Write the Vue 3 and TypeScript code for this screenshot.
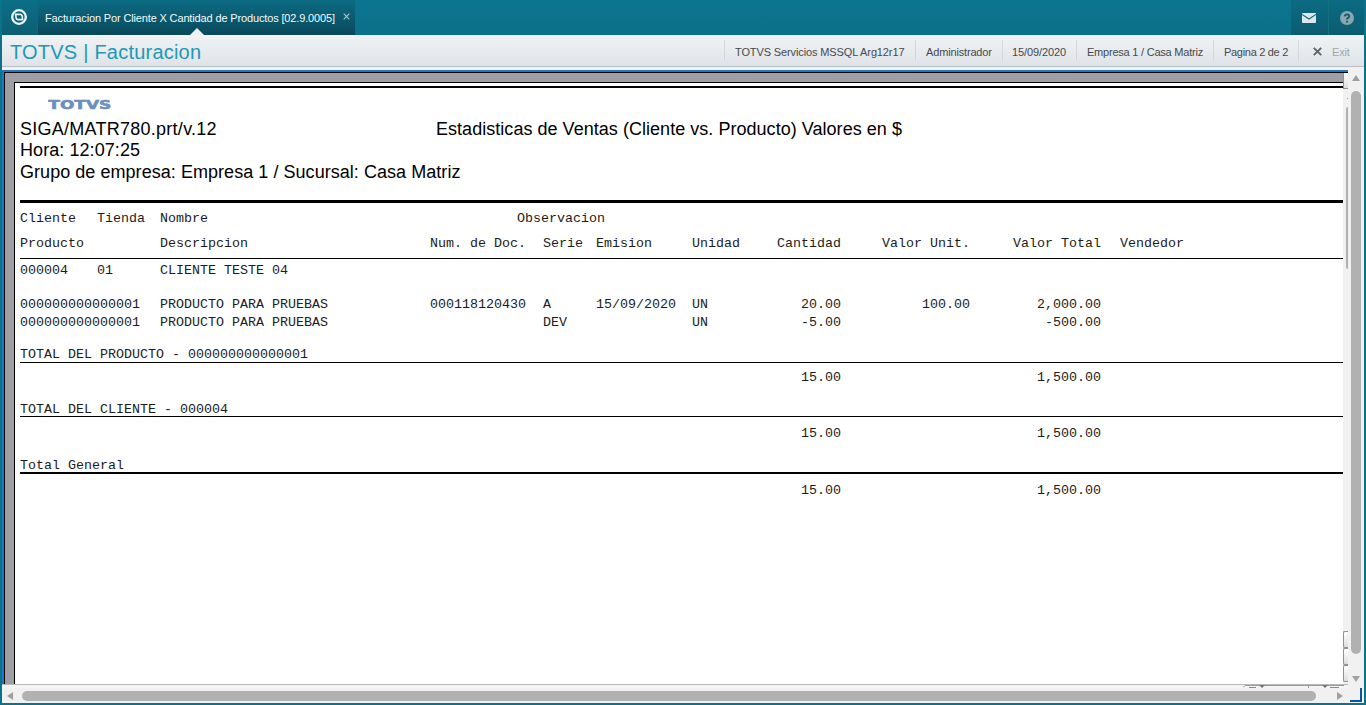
<script setup lang="ts">
interface Cell { col: string; text: string }
interface Line { gap: string; cells: Cell[]; rule?: string }

const c = (col: string, text: string): Cell => ({ col, text })

const info: { id: string; text: string }[] = [
  { id: 'server', text: 'TOTVS Servicios MSSQL Arg12r17' },
  { id: 'user', text: 'Administrador' },
  { id: 'date', text: '15/09/2020' },
  { id: 'company', text: 'Empresa 1 / Casa Matriz' },
  { id: 'pages', text: 'Pagina 2 de 2' },
]

const lines: Line[] = [
  { gap: 'g8', cells: [c('a', 'Cliente'), c('b', 'Tienda'), c('n', 'Nombre'), c('obs', 'Observacion')] },
  {
    gap: 'g11',
    rule: 'thin after8',
    cells: [
      c('a', 'Producto'), c('n', 'Descripcion'), c('doc', 'Num. de Doc.'), c('ser', 'Serie'),
      c('emi', 'Emision'), c('uni', 'Unidad'), c('qty', 'Cantidad'), c('price', 'Valor Unit.'),
      c('total', 'Valor Total'), c('seller', 'Vendedor'),
    ],
  },
  { gap: 'g4', cells: [c('a', '000004'), c('b', '01'), c('n', 'CLIENTE TESTE 04')] },
  {
    gap: 'g20',
    cells: [
      c('a', '000000000000001'), c('n', 'PRODUCTO PARA PRUEBAS'), c('doc', '000118120430'), c('ser', 'A'),
      c('emi', '15/09/2020'), c('uni', 'UN'), c('qty', '20.00'), c('price', '100.00'), c('total', '2,000.00'),
    ],
  },
  {
    gap: 'g4',
    cells: [
      c('a', '000000000000001'), c('n', 'PRODUCTO PARA PRUEBAS'), c('ser', 'DEV'), c('uni', 'UN'),
      c('qty', '-5.00'), c('total', '-500.00'),
    ],
  },
  { gap: 'g18', rule: 'thin after1', cells: [c('a', 'TOTAL DEL PRODUCTO - 000000000000001')] },
  { gap: 'g7', cells: [c('qty', '15.00'), c('total', '1,500.00')] },
  { gap: 'g18', rule: 'thin', cells: [c('a', 'TOTAL DEL CLIENTE - 000004')] },
  { gap: 'g9', cells: [c('qty', '15.00'), c('total', '1,500.00')] },
  { gap: 'g18', rule: 'medium', cells: [c('a', 'Total General')] },
  { gap: 'g9', cells: [c('qty', '15.00'), c('total', '1,500.00')] },
]
</script>

<template>
  <div class="window">
    <header class="topbar">
      <div class="brand">
        <svg width="16" height="16" viewBox="0 0 16 16">
          <circle cx="8" cy="8" r="6.8" fill="#0b6279" stroke="#eef7f9" stroke-width="2.3" />
          <path d="M4.6 5.4 H9.4 Q10.8 5.6 11.2 7 L11.6 10.6 H6.8 Q5.4 10.4 5.1 9Z" fill="#0b6279" stroke="#eef7f9" stroke-width="1.6" stroke-linejoin="round" />
        </svg>
      </div>
      <div class="tab">
        <span class="tab-title">Facturacion Por Cliente X Cantidad de Productos [02.9.0005]</span>
        <svg class="tab-close" width="7" height="7" viewBox="0 0 7 7">
          <path d="M.7 .7 L6.3 6.3 M6.3 .7 L.7 6.3" stroke="#a5c9d2" stroke-width="1.1" />
        </svg>
        <i class="notch"></i>
      </div>
      <div class="spacer"></div>
      <div class="tool mail">
        <svg width="14" height="10" viewBox="0 0 14 10">
          <rect width="14" height="10" rx=".8" fill="#dbe9ed" />
          <path d="M0 1.4 L7 6 L14 1.4" fill="none" stroke="#1a6476" stroke-width="1.2" />
        </svg>
      </div>
      <div class="tool help">
        <svg width="14" height="14" viewBox="0 0 14 14">
          <circle cx="7" cy="7" r="7" fill="#88a7b0" />
          <path d="M4.8 5.4 Q4.9 3.3 7 3.3 Q9.2 3.4 9.2 5.2 Q9.2 6.3 8 6.9 Q7 7.4 7 8.6" fill="none" stroke="#135b6c" stroke-width="1.8" />
          <rect x="6.1" y="9.7" width="1.8" height="1.8" fill="#135b6c" />
        </svg>
      </div>
    </header>

    <div class="bar">
      <h1>TOTVS | Facturacion</h1>
      <div class="spacer"></div>
      <div v-for="i in info" :key="i.id" class="info" :class="i.id"><span>{{ i.text }}</span></div>
      <div class="info exit">
        <svg width="9" height="9" viewBox="0 0 9 9">
          <path d="M.8 .8 L8.2 8.2 M8.2 .8 L.8 8.2" stroke="#5c636a" stroke-width="1.9" />
        </svg>
        <span>Exit</span>
      </div>
    </div>

    <div class="body">
      <div class="view">
        <div class="desk">
          <main class="page">
            <div class="rule medium"></div>
            <div class="logo">
              <svg width="70" height="16" viewBox="0 0 70 16">
                <text x="0.3" y="12.4" textLength="63" lengthAdjust="spacingAndGlyphs">TOTVS</text>
              </svg>
            </div>
            <div class="heading">
              <span class="prog">SIGA/MATR780.prt/v.12</span>
              <span class="title">Estadisticas de Ventas (Cliente vs. Producto) Valores en $</span>
            </div>
            <div class="heading hour">Hora: 12:07:25</div>
            <div class="heading group">Grupo de empresa: Empresa 1 / Sucursal: Casa Matriz</div>
            <div class="rule thick"></div>
            <template v-for="(l, k) in lines" :key="k">
              <div class="line" :class="l.gap">
                <span v-for="cell in l.cells" :key="cell.col" :class="cell.col">{{ cell.text }}</span>
              </div>
              <div v-if="l.rule" class="rule" :class="l.rule"></div>
            </template>
          </main>
          <aside class="strip">
            <i class="btn first"></i>
            <i class="dot"></i>
            <i class="inner-thumb"></i>
            <i class="gap"></i>
            <i class="btn"></i>
            <i class="btn"></i>
            <i class="btn"></i>
          </aside>
        </div>
        <div class="under">
          <svg width="102" height="3" viewBox="0 0 102 3">
            <path d="M0 2.5 L2 .5 H101 M65.5 0 V3" fill="none" stroke="#9a9a9a" />
            <path d="M6 2.5 H13 M87 2.5 H96" stroke="#8a8a8a" />
            <path d="M16 0 H22 L19 3Z M79 0 H85 L82 3Z" fill="#777" />
          </svg>
        </div>
      </div>
      <div class="vscroll">
        <svg width="8" height="6" viewBox="0 0 8 6"><path d="M4 0 L8 6 H0Z" fill="#a0a0a0" /></svg>
        <i></i>
        <svg width="8" height="6" viewBox="0 0 8 6"><path d="M4 6 L8 0 H0Z" fill="#a0a0a0" /></svg>
      </div>
    </div>
    <footer class="hscroll">
      <svg width="6" height="8" viewBox="0 0 6 8"><path d="M0 4 L6 0 V8Z" fill="#a0a0a0" /></svg>
      <i></i>
      <svg width="6" height="8" viewBox="0 0 6 8"><path d="M6 4 L0 0 V8Z" fill="#a0a0a0" /></svg>
      <b class="grip"></b>
    </footer>
  </div>
</template>

<style>
html, body { margin: 0; overflow: hidden; }
</style>

<style scoped>
* { box-sizing: border-box; }
.window {
  width: 1366px; height: 705px; padding: 0 2px 2px; background: #0b728b;
  display: flex; flex-direction: column; overflow: hidden;
  font-family: "Liberation Sans", Arial, sans-serif;
}
.spacer { flex: 1; }
svg { display: block; flex: none; }

.topbar { height: 35px; flex: none; display: flex; background: linear-gradient(#0b7590, #0b7089); }
.brand {
  width: 36px; border-right: 1px solid #176478; background: linear-gradient(#0b6f88, #0b5f73);
  display: flex; align-items: center; padding: 0 0 1px 9px;
}
.tab {
  position: relative; width: 317px; padding-left: 7px; display: flex; align-items: center;
  background: linear-gradient(#0b6c84, #09495a);
}
.tab-title { color: #f3fafb; font-size: 11px; line-height: 14px; letter-spacing: -.145px; white-space: nowrap; width: 290px; }
.tab-close { margin: -3px 0 0 8px; }
.notch {
  position: absolute; left: 152px; bottom: 0; width: 0; height: 0;
  border: 7px solid transparent; border-top: 0; border-bottom-color: #eef1f4;
}
.tool { width: 37px; padding-right: 1px; display: flex; align-items: center; justify-content: center; background: linear-gradient(#0b6b83, #0b5c70); }
.help { width: 36px; padding-right: 0; border-left: 1px solid #176f84; }

.bar {
  height: 32px; flex: none; display: flex; align-items: center;
  background: linear-gradient(#f1f3f5, #dfe3e8); border-bottom: 1px solid #bcbec6;
}
h1 { margin: 2px 0 0 8px; font-weight: 400; font-size: 20px; line-height: 24px; color: #2098b8; letter-spacing: .22px; white-space: nowrap; }
.info {
  height: 21px; padding: 3px 0 0 10px; border-left: 1px solid #d3d6da; color: #45494d;
  font-size: 11px; line-height: 18px; white-space: nowrap; flex: none;
}
.server { width: 191px; letter-spacing: -.12px; }
.user { width: 87px; letter-spacing: -.16px; }
.date { width: 74px; padding-left: 9px; letter-spacing: -.1px; }
.company { width: 137px; letter-spacing: -.22px; }
.pages { width: 85px; letter-spacing: -.3px; }
.exit { width: 66px; padding: 1px 0 0 14px; display: flex; align-items: center; color: #a2a6aa; letter-spacing: -.2px; }
.exit svg { margin-right: 10px; }
.exit span { padding-top: 2px; }

.body { height: 621px; flex: none; display: flex; background: #f1f1f2; }
.view { width: 1346px; padding-top: 3px; display: flex; flex-direction: column; }
.desk {
  height: 614px; display: flex; border: 2px solid #1f78bf; border-width: 2px 0 0 2px;
  background: #9f9ea4; padding: 10px 0 0 10px;
  box-shadow: inset 1px 1px 0 #000;
}
.page {
  width: 1329px; flex: none; background: #fff; border: 1px solid #000; border-width: 1px 0 0 1px;
  padding: 3px 0 0 5px; overflow: hidden;
}
.strip { width: 5px; margin-top: -9px; padding-bottom: 2px; background: #f1f1f2; display: flex; flex-direction: column; }
.btn { height: 17px; background: linear-gradient(#fff, #dedede); border: 1px solid #909090; border-right: 0; border-radius: 2px 0 0 2px; flex: none; }
.btn.first { border-top: 0; height: 16px; border-radius: 0; }
.dot { width: 1px; height: 1px; margin: 9px 0 8px 4px; background: #999; }
.inner-thumb { width: 2px; height: 162px; margin-left: 3px; background: #b0b0b0; border-radius: 2px 0 0 2px; flex: none; }
.strip .gap { flex: 1; }
.under { height: 4px; background: #f4f4f4; border-top: 1px solid #b8b8b8; padding-left: 1241px; }

.rule { height: 1px; background: #000; }
.rule.medium { height: 2px; }
.rule.thick { height: 3px; margin-top: 17px; }
.after8 { margin-top: 8px; }
.after1 { margin-top: 1px; }

.logo { height: 16px; margin: 9px 0 0 28px; }
.logo text { font-family: "DejaVu Sans", sans-serif; font-weight: 700; font-size: 13px; fill: #6c8fbf; stroke: #6c8fbf; stroke-width: .6; }
.heading { height: 22px; margin-top: 5px; font-size: 18px; line-height: 22px; color: #000; white-space: nowrap; display: flex; }
.prog { width: 416px; letter-spacing: .26px; }
.title { letter-spacing: .035px; }
.hour { margin-top: 0; height: 21px; line-height: 21px; letter-spacing: .07px; }
.group { margin-top: 0; letter-spacing: .045px; }

.line {
  height: 14px; display: grid;
  grid-template-columns: 77px 63px 270px 113px 53px 96px 60px 89px 129px 131px 19px 1fr;
  font-family: "Liberation Mono", "Courier New", monospace; font-size: 13.333px; line-height: 16px;
  color: #1c1c1c; white-space: pre;
}
.line span { grid-row: 1; width: 0; }
.g4 { margin-top: 4px; } .g7 { margin-top: 7px; } .g8 { margin-top: 8px; } .g9 { margin-top: 9px; }
.g11 { margin-top: 11px; } .g18 { margin-top: 18px; } .g20 { margin-top: 20px; }
.a { grid-column: 1; } .b { grid-column: 2; } .n { grid-column: 3; } .doc { grid-column: 4; }
.obs { grid-column: 4; margin-left: 87px; }
.ser { grid-column: 5; } .emi { grid-column: 6; } .uni { grid-column: 7; } .seller { grid-column: 12; }
.line .qty { grid-column: 8; } .line .price { grid-column: 9; } .line .total { grid-column: 10; }
.line .qty, .line .price, .line .total { width: auto; text-align: right; }

.vscroll { width: 16px; padding-top: 5px; display: flex; flex-direction: column; align-items: center; margin-top: 3px; }
.vscroll i { width: 10px; height: 563px; margin: 10px 0 22px; border-radius: 5px; background: #b1b1b1; flex: none; }
.hscroll { height: 15px; flex: none; display: flex; align-items: center; background: #f1f1f2; padding-left: 5px; }
.hscroll i { width: 1294px; height: 10px; margin: 0 21px 0 9px; border-radius: 5px; background: #b1b1b1; flex: none; }
.grip { width: 12px; height: 14px; margin: -2px 0 0 7px; border: 2px solid #0b559e; border-width: 0 2px 2px 0; }
</style>
